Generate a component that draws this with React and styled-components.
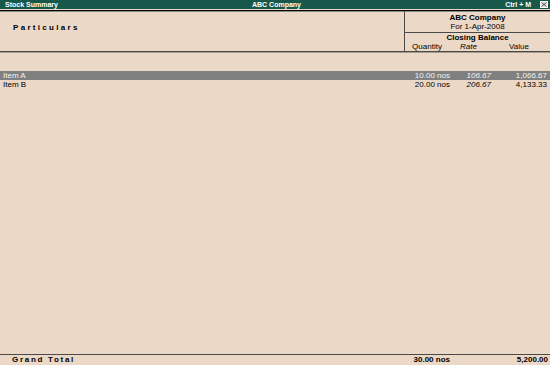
import React from "react";
import styled, { createGlobalStyle } from "styled-components";

const Global = createGlobalStyle`
  html, body { margin: 0; padding: 0; background: #ecd8c7; }
  body { font-family: "Liberation Sans", Arial, sans-serif; font-size: 8px; color: #000; }
  * { box-sizing: border-box; }
`;

const Screen = styled.div`
  width: 550px;
  height: 365px;
  display: flex;
  flex-direction: column;
  background: #ecd8c7;
  overflow: hidden;
`;

const TitleBar = styled.div`
  height: 9px;
  flex: none;
  background: #17584a;
  color: #fff;
  font-weight: bold;
  font-size: 7px;
  line-height: 8px;
  padding: 1px 2px 0 5px;
  display: grid;
  grid-template-columns: 1fr auto 1fr;
  align-items: start;
`;

const TitleRight = styled.div`
  display: flex;
  justify-content: flex-end;
  gap: 9px;
`;

const CloseBox = styled.span`
  width: 8px;
  height: 7px;
  background: #e4e4e4;
  border: 1px solid #fff;
  display: flex;
  align-items: center;
  justify-content: center;
`;

const Spacer = styled.div`
  height: 1px;
  flex: none;
`;

const Header = styled.div`
  flex: none;
  height: 42px;
  border-top: 1px solid #000;
  border-bottom: 1px solid #4a4a4a;
  box-shadow: inset 0 1px 0 #8a8a8a, 0 1px 0 #a89a8e;
  display: flex;
`;

const ParticularsCell = styled.div`
  flex: 1;
  border-right: 1px solid #4a4a4a;
  padding: 12px 0 0 13px;
  font-weight: bold;
  letter-spacing: 2.3px;
  line-height: 9px;
`;

const RightHead = styled.div`
  width: 145px;
  display: flex;
  flex-direction: column;
`;

const PeriodBlock = styled.div`
  height: 22px;
  padding-top: 2px;
  border-bottom: 1px solid #4a4a4a;
  text-align: center;
  line-height: 9px;
`;

const Line = styled.div`
  font-weight: ${(p) => (p.$bold ? "bold" : "normal")};
  font-style: ${(p) => (p.$italic ? "italic" : "normal")};
`;

const ClosingBlock = styled.div`
  height: 18px;
  line-height: 9px;
  text-align: center;
`;

const HeadCols = styled.div`
  display: grid;
  grid-template-columns: 44px 39px 62px;
  text-align: center;
`;

const Body = styled.div`
  flex: 1;
  padding-top: 19px;
`;

const Row = styled.div`
  display: flex;
  height: 9px;
  line-height: 9px;
  background: ${(p) => (p.$selected ? "#808080" : "transparent")};
  color: ${(p) => (p.$selected ? "#f4f4f4" : "#000")};
  font-weight: ${(p) => (p.$bold ? "bold" : "normal")};
`;

const Name = styled.div`
  flex: 1;
  padding-left: ${(p) => p.$pl || 3}px;
  letter-spacing: ${(p) => p.$ls || 0}px;
  white-space: nowrap;
`;

const DataCols = styled.div`
  width: 145px;
  display: grid;
  grid-template-columns: 46px 43px 56px;
`;

const Num = styled.div`
  text-align: right;
  padding-right: ${(p) => p.$pr}px;
  font-style: ${(p) => (p.$italic ? "italic" : "normal")};
  white-space: nowrap;
`;

const Footer = styled.div`
  flex: none;
  height: 11px;
  border-top: 1px solid #4a4a4a;
`;

const FooterRow = styled(Row)`
  height: 10px;
  line-height: 10px;
`;

const items = [
  { name: "Item A", qty: "10.00 nos", rate: "106.67", value: "1,066.67", selected: true },
  { name: "Item B", qty: "20.00 nos", rate: "206.67", value: "4,133.33" },
];

export default function App() {
  return (
    <Screen>
      <Global />
      <TitleBar>
        <span>Stock Summary</span>
        <span>ABC Company</span>
        <TitleRight>
          <span>Ctrl + M</span>
          <CloseBox>
            <svg width="6" height="5" viewBox="0 0 6 5">
              <path d="M0.5 0.5 L5.5 4.5 M5.5 0.5 L0.5 4.5" stroke="#333" strokeWidth="0.8" />
            </svg>
          </CloseBox>
        </TitleRight>
      </TitleBar>
      <Spacer />
      <Header>
        <ParticularsCell>Particulars</ParticularsCell>
        <RightHead>
          <PeriodBlock>
            <Line $bold>ABC Company</Line>
            <Line>For 1-Apr-2008</Line>
          </PeriodBlock>
          <ClosingBlock>
            <Line $bold>Closing Balance</Line>
            <HeadCols>
              <Line>Quantity</Line>
              <Line $italic>Rate</Line>
              <Line>Value</Line>
            </HeadCols>
          </ClosingBlock>
        </RightHead>
      </Header>
      <Body>
        {items.map((it) => (
          <Row key={it.name} $selected={it.selected}>
            <Name>{it.name}</Name>
            <DataCols>
              <Num $pr={1}>{it.qty}</Num>
              <Num $pr={3} $italic>{it.rate}</Num>
              <Num $pr={3}>{it.value}</Num>
            </DataCols>
          </Row>
        ))}
      </Body>
      <Footer>
        <FooterRow $bold>
          <Name $pl={12} $ls={1.7}>Grand Total</Name>
          <DataCols>
            <Num $pr={1}>30.00 nos</Num>
            <Num $pr={3}></Num>
            <Num $pr={2}>5,200.00</Num>
          </DataCols>
        </FooterRow>
      </Footer>
    </Screen>
  );
}
